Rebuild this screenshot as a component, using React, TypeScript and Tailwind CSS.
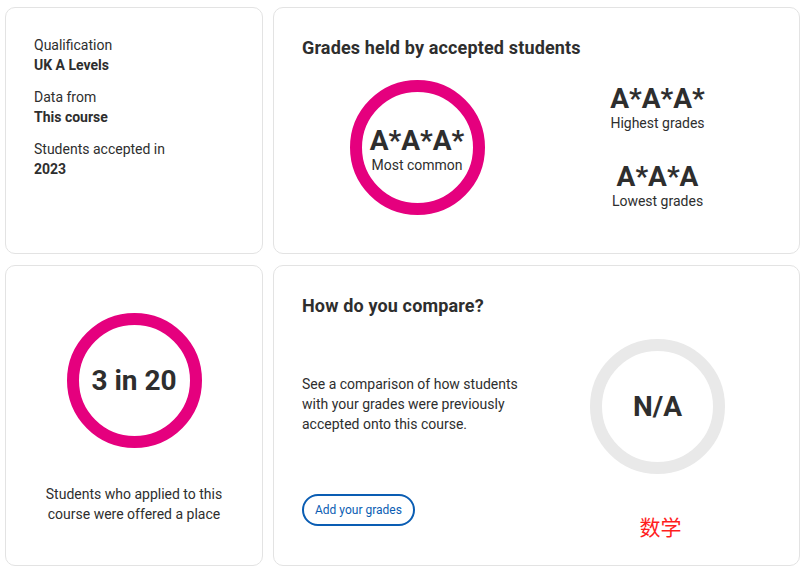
import React from "react";

const card = "bg-white border border-[#e3e3e3] rounded-[10px]";

function Ring({ color, children }: { color: string; children: React.ReactNode }) {
  return (
    <div
      className={`w-[135px] h-[135px] rounded-full border-[12px] flex flex-col items-center justify-center ${color}`}
    >
      {children}
    </div>
  );
}

export default function App() {
  return (
    <div
      className="w-[804px] h-[574px] bg-white text-[#2e2e2e] pt-[7px] pl-[5px]"
      style={{ fontFamily: "Roboto, 'Noto Sans CJK SC', sans-serif" }}
    >
      <div className="grid grid-cols-[258px_527px] grid-rows-[247px_301px] gap-x-[10px] gap-y-[11px]">
        {/* Card 1 */}
        <div className={`${card} pt-[27px] px-[28px]`}>
          <div className="flex flex-col gap-[12px] text-[14px] leading-[20px]">
            <div>
              <div>Qualification</div>
              <div className="font-bold">UK A Levels</div>
            </div>
            <div>
              <div>Data from</div>
              <div className="font-bold">This course</div>
            </div>
            <div>
              <div>Students accepted in</div>
              <div className="font-bold">2023</div>
            </div>
          </div>
        </div>

        {/* Card 2 */}
        <div className={`${card} pt-[28px] px-[28px]`}>
          <div className="text-[18px] leading-[24px] font-bold tracking-[0.15px]">Grades held by accepted students</div>
          <div className="grid grid-cols-[230px_1fr] mt-[20px]">
            <div className="flex justify-center">
              <Ring color="border-[#e5007e]">
                <div className="text-[28px] leading-[28px] font-bold mt-[6px]">A*A*A*</div>
                <div className="text-[14px] leading-[20px]">Most common</div>
              </Ring>
            </div>
            <div className="flex flex-col items-center justify-center gap-[30px] pl-[12px]">
              <div className="flex flex-col items-center">
                <div className="text-[28px] leading-[28px] font-bold">A*A*A*</div>
                <div className="text-[14px] leading-[20px]">Highest grades</div>
              </div>
              <div className="flex flex-col items-center">
                <div className="text-[28px] leading-[28px] font-bold">A*A*A</div>
                <div className="text-[14px] leading-[20px]">Lowest grades</div>
              </div>
            </div>
          </div>
        </div>

        {/* Card 3 */}
        <div className={`${card} pt-[47px] px-[28px] flex flex-col items-center`}>
          <Ring color="border-[#e5007e]">
            <div className="text-[28px] leading-[32px] font-bold">3 in 20</div>
          </Ring>
          <div className="mt-[36px] text-[14px] leading-[20px] text-center">
            Students who applied to this
            <br />
            course were offered a place
          </div>
        </div>

        {/* Card 4 */}
        <div className={`${card} pt-[28px] px-[28px]`}>
          <div className="text-[18px] leading-[24px] font-bold tracking-[0.15px]">How do you compare?</div>
          <div className="grid grid-cols-[230px_1fr]">
            <div className="flex flex-col items-start">
              <p className="mt-[56px] text-[14px] leading-[20px] w-[225px]">
                See a comparison of how students with your grades were previously accepted onto this course.
              </p>
              <button className="mt-[60px] h-[32px] px-[11px] rounded-full border-2 border-[#0a5db3] text-[#0a5db3] text-[12px] leading-[16px] bg-white">
                Add your grades
              </button>
            </div>
            <div className="flex flex-col items-center pt-[21px] pl-[12px]">
              <Ring color="border-[#e9e9e9]">
                <div className="text-[28px] leading-[32px] font-bold">N/A</div>
              </Ring>
              <div className="mt-[40px] ml-[6px] text-[21px] leading-[28px] text-[#ff1e1e]">数学</div>
            </div>
          </div>
        </div>
      </div>
    </div>
  );
}
